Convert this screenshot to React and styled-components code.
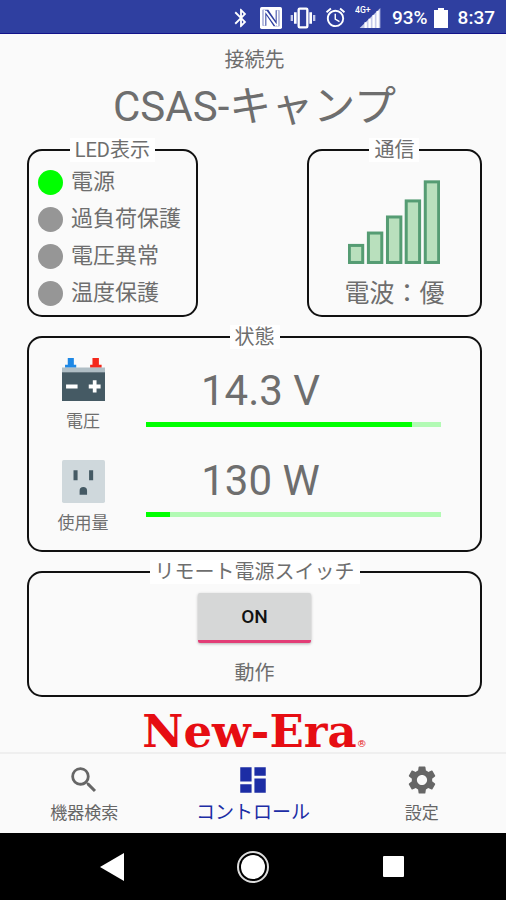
// App.jsx

import React, { useState } from 'react';
import styled, { createGlobalStyle } from 'styled-components';
import {
  MdAlarm,
  MdBluetooth,
  MdDashboard,
  MdSearch,
  MdSettings,
} from 'react-icons/md';

const GlobalStyle = createGlobalStyle`
  * {
    box-sizing: border-box;
  }

  body {
    margin: 0;
    background: #fafafa;
    color: #6e6e6e;
    font-family: Roboto, 'Noto Sans CJK JP', sans-serif;
  }

  button {
    font-family: inherit;
  }
`;

const Page = styled.div`
  display: flex;
  flex-direction: column;
  min-height: 100vh;
`;

const StatusBar = styled.header`
  display: flex;
  align-items: center;
  justify-content: flex-end;
  height: 34px;
  padding: 2px 11px 0;
  background: #2f3fa0;
  border-bottom: 1px solid #12128a;
  color: #fff;
  font-size: 19px;
  font-weight: 500;

  svg {
    flex: none;
  }
`;

const StatusIcons = styled.div`
  display: flex;
  align-items: center;
  gap: 8px;
  margin-right: 11px;
`;

const Battery = styled.svg`
  margin: 0 10px 0 6px;
`;

const Main = styled.main`
  flex: 1;
  display: flex;
  flex-direction: column;
  padding: 10px 24px 0 27px;
`;

const Caption = styled.p`
  margin: 0;
  font-size: 20px;
  line-height: 32px;
  text-align: center;
`;

const DeviceName = styled.h1`
  margin: 0;
  font-size: 42px;
  font-weight: 400;
  line-height: 62px;
  text-align: center;
`;

const Panels = styled.div`
  display: flex;
  flex-direction: column;
  gap: 8px;
`;

const TopPanels = styled.div`
  display: grid;
  grid-template-columns: 37.5% 38.5%;
  justify-content: space-between;
`;

const Panel = styled.fieldset`
  min-width: 0;
  margin: 0;
  padding: 0;
  border: 2px solid #111;
  border-radius: 15px;
`;

const PanelTitle = styled.legend`
  margin: 0 auto;
  padding: 0 5px;
  background: #fff;
  font-size: 20px;
  line-height: 24px;
`;

const LedList = styled.ul`
  display: flex;
  flex-direction: column;
  gap: 1px;
  margin: 0;
  padding: 2px 9px 4px;
  list-style: none;
`;

const LedItem = styled.li`
  display: flex;
  align-items: center;
  gap: 8px;
  font-size: 22px;
  line-height: 36px;
  white-space: nowrap;
`;

const Led = styled.span`
  flex: none;
  width: 25px;
  height: 25px;
  border-radius: 50%;
  background: ${(props) => (props.$on ? '#00ff00' : '#969696')};
`;

const Signal = styled.div`
  display: flex;
  flex-direction: column;
  align-items: center;
  gap: 14px;
  padding-top: 18px;
  font-size: 25px;
  line-height: 32px;
`;

const StatePanel = styled.div`
  display: flex;
  gap: 9px;
  padding: 9px 39px 15px 0;
`;

const SourceColumn = styled.div`
  display: flex;
  flex-direction: column;
  gap: 27px;
  width: 108px;
`;

const Source = styled.div`
  display: flex;
  flex-direction: column;
  align-items: center;
  gap: 8px;
  font-size: 17px;
  line-height: 24px;
`;

const ReadingColumn = styled.div`
  flex: 1;
  display: flex;
  flex-direction: column;
  gap: 29px;
  padding-top: 8px;
`;

const Value = styled.div`
  margin-bottom: 6px;
  padding-right: 66px;
  font-size: 42px;
  line-height: 50px;
  text-align: center;
`;

const Gauge = styled.progress`
  display: block;
  width: 100%;
  height: 5px;
  border: 0;
  appearance: none;
  background: #b2fab4;

  &::-webkit-progress-bar {
    background: #b2fab4;
  }

  &::-webkit-progress-value {
    background: #00ff00;
  }
`;

const SwitchPanel = styled.div`
  display: flex;
  flex-direction: column;
  align-items: center;
  gap: 14px;
  padding: 9px 0 6px;
`;

const PowerButton = styled.button`
  width: 113px;
  height: 50px;
  padding: 0;
  border: 0;
  border-bottom: 3px solid ${(props) => (props.$on ? '#e23d76' : '#b0b0b0')};
  border-radius: 2px;
  background: #d6d7d7;
  box-shadow: 0 1px 3px rgba(0, 0, 0, 0.3);
  color: #111;
  font-size: 19px;
  font-weight: 500;
`;

const Brand = styled.div`
  display: flex;
  align-items: flex-end;
  justify-content: center;
  margin-top: 17px;
  color: #e60d12;
  font-family: 'DejaVu Serif', serif;
  font-size: 45px;
  font-weight: 700;
  line-height: 36px;
  white-space: nowrap;
`;

const Registered = styled.span`
  font-size: 10px;
  font-weight: 400;
  line-height: 12px;
`;

const BottomNav = styled.nav`
  display: grid;
  grid-template-columns: repeat(3, 1fr);
  height: 81px;
  border-top: 2px solid #efefef;
  background: #fafafa;
`;

const NavLink = styled.a`
  display: flex;
  flex-direction: column;
  align-items: center;
  padding-top: 9px;
  color: ${(props) => (props.$active ? '#1c2da5' : '#666')};
  font-size: ${(props) => (props.$active ? '19px' : '17px')};
  line-height: 32px;
  text-decoration: none;
`;

const SystemBar = styled.footer`
  display: grid;
  grid-template-columns: repeat(3, 1fr);
  height: 67px;
  padding: 0 42px;
  background: #000;
`;

const SystemButton = styled.button`
  display: flex;
  align-items: center;
  justify-content: center;
  padding: 0;
  border: 0;
  background: none;
`;

const leds = [
  { name: '電源', on: true },
  { name: '過負荷保護', on: false },
  { name: '電圧異常', on: false },
  { name: '温度保護', on: false },
];

const tabs = [
  { name: '機器検索', icon: MdSearch },
  { name: 'コントロール', icon: MdDashboard, active: true },
  { name: '設定', icon: MdSettings },
];

const NfcIcon = () => (
  <svg width="22" height="22" viewBox="0 0 66 66" aria-hidden="true">
    <rect width="66" height="66" rx="5" fill="#fff" />
    <path
      d="M8 56h11V25l22 33h17V10H47v31L25 8H8z"
      fill="#2f3fa0"
    />
    <path d="M13 8v48M53 10v48M17 12l32 44" fill="none" stroke="#fff" strokeWidth="6" />
  </svg>
);

const VibrateIcon = () => (
  <svg width="26" height="22" viewBox="0 0 78 66" aria-hidden="true">
    <rect x="26" y="5" width="26" height="56" rx="3" fill="none" stroke="#fff" strokeWidth="7" />
    <path d="M12 16h8v34h-8zM58 16h8v34h-8z" fill="#fff" />
    <path d="M2 24h7v18H2zM69 24h7v18h-7z" fill="#c5cae9" />
  </svg>
);

const MobileIcon = () => (
  <svg width="26" height="24" viewBox="0 0 78 72" aria-hidden="true">
    <path d="M76 6v60H14z" fill="#c5cae9" />
    <path d="M32 49v17M44 38v28M56 27v39M68 15v51" stroke="#fff" strokeWidth="7" />
    <text x="0" y="22" fill="#fff" fontSize="26" fontWeight="500">
      4G+
    </text>
  </svg>
);

const SignalBars = () => (
  <svg width="92" height="84" viewBox="0 0 275 250" aria-hidden="true">
    <g fill="#b9e0bd" stroke="#559c73" strokeWidth="9">
      <rect x="4" y="195" width="40" height="51" />
      <rect x="61" y="158" width="40" height="88" />
      <rect x="118" y="110" width="40" height="136" />
      <rect x="174" y="62" width="40" height="184" />
      <rect x="231" y="5" width="40" height="241" />
    </g>
  </svg>
);

const BatteryIcon = () => (
  <svg width="43" height="43" viewBox="0 0 127 127" aria-hidden="true">
    <path d="M17 0h18v20h7v9H9v-9h8z" fill="#1e88e5" />
    <path d="M90 0h19v20h8v9H83v-9h7z" fill="#f4281b" />
    <path d="M0 28h127v15H0z" fill="#b0bec5" />
    <path d="M0 42h127v85H0z" fill="#455a64" />
    <path d="M12 78h34v12H12zM79 78h12V66h11v12h12v12h-12v12H91V90H79z" fill="#fff" />
  </svg>
);

const OutletIcon = () => (
  <svg width="43" height="43" viewBox="0 0 127 127" aria-hidden="true">
    <rect width="127" height="127" rx="5" fill="#cfd8dc" />
    <path d="M34 30h12v30H34zM80 30h12v30H80zM52 103V91a11 11 0 0 1 22 0v12z" fill="#455a64" />
  </svg>
);

const App = () => {
  const [powerOn, setPowerOn] = useState(true);

  return (
    <Page>
      <GlobalStyle />
      <StatusBar>
        <StatusIcons>
          <MdBluetooth size={22} />
          <NfcIcon />
          <VibrateIcon />
          <MdAlarm size={23} />
          <MobileIcon />
        </StatusIcons>
        <span>93%</span>
        <Battery width="14" height="20" viewBox="0 0 14 20" aria-hidden="true">
          <path d="M4 0h6v2h4v18H0V2h4z" fill="#fff" />
        </Battery>
        <span>8:37</span>
      </StatusBar>

      <Main>
        <Caption>接続先</Caption>
        <DeviceName>CSAS-キャンプ</DeviceName>

        <Panels>
          <TopPanels>
            <Panel>
              <PanelTitle>LED表示</PanelTitle>
              <LedList>
                {leds.map((led) => (
                  <LedItem key={led.name}>
                    <Led $on={led.on} />
                    {led.name}
                  </LedItem>
                ))}
              </LedList>
            </Panel>
            <Panel>
              <PanelTitle>通信</PanelTitle>
              <Signal>
                <SignalBars />
                <span>電波：優</span>
              </Signal>
            </Panel>
          </TopPanels>

          <Panel>
            <PanelTitle>状態</PanelTitle>
            <StatePanel>
              <SourceColumn>
                <Source>
                  <BatteryIcon />
                  <label htmlFor="voltage">電圧</label>
                </Source>
                <Source>
                  <OutletIcon />
                  <label htmlFor="usage">使用量</label>
                </Source>
              </SourceColumn>
              <ReadingColumn>
                <div>
                  <Value>14.3 V</Value>
                  <Gauge id="voltage" max="100" value="90" />
                </div>
                <div>
                  <Value>130 W</Value>
                  <Gauge id="usage" max="100" value="8" />
                </div>
              </ReadingColumn>
            </StatePanel>
          </Panel>

          <Panel>
            <PanelTitle>リモート電源スイッチ</PanelTitle>
            <SwitchPanel>
              <PowerButton
                type="button"
                $on={powerOn}
                aria-pressed={powerOn}
                onClick={() => setPowerOn(!powerOn)}
              >
                {powerOn ? 'ON' : 'OFF'}
              </PowerButton>
              <Caption>動作</Caption>
            </SwitchPanel>
          </Panel>
        </Panels>

        <Brand>
          New-Era
          <Registered>®</Registered>
        </Brand>
      </Main>

      <BottomNav>
        {tabs.map(({ name, icon: Icon, active }) => (
          <NavLink key={name} href="#" $active={active}>
            <Icon size={34} />
            {name}
          </NavLink>
        ))}
      </BottomNav>

      <SystemBar>
        <SystemButton type="button" aria-label="戻る">
          <svg width="24" height="28" viewBox="0 0 24 28">
            <path d="M24 0v28L0 14z" fill="#fff" />
          </svg>
        </SystemButton>
        <SystemButton type="button" aria-label="ホーム">
          <svg width="32" height="32" viewBox="0 0 32 32">
            <circle cx="16" cy="16" r="15" fill="none" stroke="#ddd" strokeWidth="2" />
            <circle cx="16" cy="16" r="12" fill="#fff" />
          </svg>
        </SystemButton>
        <SystemButton type="button" aria-label="履歴">
          <svg width="21" height="21" viewBox="0 0 21 21">
            <rect width="21" height="21" rx="1" fill="#fff" />
          </svg>
        </SystemButton>
      </SystemBar>
    </Page>
  );
};

export default App;
